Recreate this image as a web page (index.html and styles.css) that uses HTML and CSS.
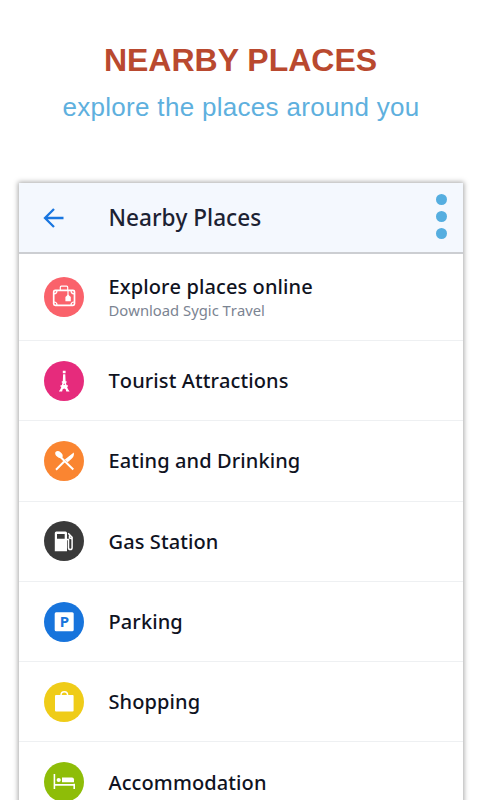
FILE: index.html
```html
<!DOCTYPE html>
<html lang="en">
<head>
<meta charset="utf-8">
<title>Nearby Places</title>
<link rel="stylesheet" href="styles.css">
</head>
<body>
<header class="promo">
  <h1 class="promo-title"><span>NEARBY PLACES</span></h1>
  <p class="promo-text"><span>explore the places around you</span></p>
</header>
<main class="card">
  <div class="bar">
    <svg class="back" viewBox="0 0 22 22"><path d="M20.5 11H2M11 2L2 11l9 9"/></svg>
    <h2 class="bar-title"><span>Nearby Places</span></h2>
    <div class="dots"><i></i><i></i><i></i></div>
  </div>
  <ul class="list">
    <li class="row row-tall">
      <svg class="icon coral" viewBox="0 0 40 40"><g class="line"><rect x="9.7" y="13.3" width="20.8" height="15" rx="1.5"/><path d="M16.3 13V10.2q0-1 1-1h5.4q1 0 1 1V13M10 16.8q3 0 3-3M30 16.8q-3 0-3-3M10 25q3 0 3 3M30 25q-3 0-3 3M24 14v5" stroke-width="1.2"/></g><path class="fill" d="M24 17.5l2.8 2.5v4.3h-5.4V20z"/></svg>
      <div class="labels"><span class="name">Explore places online</span><span class="sub">Download Sygic Travel</span></div>
    </li>
    <li class="row">
      <svg class="icon pink" viewBox="0 0 40 40"><path class="fill" d="M18.8 9.8h2.8v2.4h-2.8zM19.1 13.3h2.2l.3 7h1v1.4h-.7l.7 2.6h1.3v1.5h-.9q.6 2.6 2.6 4.6h-3.3q-.2-2.8-2.1-2.8t-2.1 2.8h-3.3q2-2 2.6-4.6h-.9v-1.5h1.3l.7-2.6h-.7v-1.4h1z"/><path class="pinkline" d="M19.5 24l.7-1.8.7 1.8z"/></svg>
      <div class="labels"><span class="name">Tourist Attractions</span></div>
    </li>
    <li class="row">
      <svg class="icon orange" viewBox="0 0 40 40"><path class="line utensil" d="M17 16.5L29.3 28.5M12 28.7L20.7 20"/><path class="fill" d="M11.5 11q2.3-2 5.3.5t1.4 5.3q-2.6 1.2-5.2-1.2t-1.5-4.6zM29.8 11.5q.8 4-2.7 6.8l-3.5 2.9-2.8-2.7z"/></svg>
      <div class="labels"><span class="name">Eating and Drinking</span></div>
    </li>
    <li class="row">
      <svg class="icon dark" viewBox="0 0 40 40"><path class="fill" d="M12.3 10.5h9.2q1.5 0 1.5 1.5v18.2H10.8V12q0-1.5 1.5-1.5z"/><path class="hole" d="M13 13.1h7.7v4.7H13z"/><path class="line hose" d="M22.5 18.5h2v8.2q0 1.8 1.8 1.8t1.8-1.8V16.3l-3.9-4.1M25.5 14.5v2.5l2.3.7"/></svg>
      <div class="labels"><span class="name">Gas Station</span></div>
    </li>
    <li class="row">
      <svg class="icon blue" viewBox="0 0 40 40"><rect class="fill" x="10.7" y="10.2" width="19" height="19" rx="1.5"/><text x="20.4" y="25.2" text-anchor="middle">P</text></svg>
      <div class="labels"><span class="name">Parking</span></div>
    </li>
    <li class="row">
      <svg class="icon yellow" viewBox="0 0 40 40"><rect class="fill" x="11" y="13" width="18.6" height="16.5" rx="1"/><path class="line handle" d="M17 13.3q0-3.6 3.3-3.6t3.3 3.6"/></svg>
      <div class="labels"><span class="name">Shopping</span></div>
    </li>
    <li class="row">
      <svg class="icon green" viewBox="0 0 40 40"><path class="line bed" d="M10.4 12v15M10.4 22.9h19.8M30.2 21.7v5.3"/><circle class="fill" cx="14.7" cy="18" r="2.1"/><path class="fill" d="M18 15.6h10q2 0 2 2v2.7H18z"/></svg>
      <div class="labels"><span class="name">Accommodation</span></div>
    </li>
  </ul>
</main>
</body>
</html>
```
FILE: styles.css
```css
* { box-sizing: border-box; margin: 0; padding: 0; }
body { width: 481px; height: 800px; overflow: hidden; background: #fff; }
.promo { height: 183px; padding-top: 42px; text-align: center; font-family: "Liberation Sans", Arial, sans-serif; }
.promo-title { font-size: 32px; line-height: 37px; font-weight: 700; color: #b9492f; }
.promo-text { margin: 13px 0 0 1px; font-size: 26px; line-height: 30px; letter-spacing: .3px; color: #5eb0de; }
.card { width: 444px; height: 640px; margin-left: 19px; background: #fff; box-shadow: 0 0 5px 1px rgba(0,0,0,.34); font-family: "Noto Sans", "Open Sans", sans-serif; font-kerning: none; }
.bar { display: flex; align-items: center; height: 71px; padding: 0 16px 0 24px; background: #f4f8fe; border-bottom: 2px solid #ccced2; }
.back { width: 22px; height: 22px; fill: none; stroke: #1976e0; stroke-width: 2.3; }
.bar-title { margin: 1px 0 0 43.5px; flex: 1; font-size: 22.6px; font-weight: 500; line-height: 30px; color: #1c2233; }
.dots { display: flex; flex-direction: column; gap: 6px; margin-top: -3px; }
.dots i { width: 11px; height: 11px; border-radius: 50%; background: #55aee0; }
.list { list-style: none; }
.row { display: flex; align-items: center; height: 80.3px; padding-left: 24.5px; border-bottom: 1px solid #eef0f2; }
.row-tall { height: 87px; }
.icon { width: 40px; height: 40px; flex: none; border-radius: 50%; }
.labels { display: flex; flex-direction: column; margin-left: 25px; padding-top: 1px; }
.row-tall .labels { padding-top: 0; }
.name { font-size: 20px; font-weight: 500; line-height: 26px; letter-spacing: .1px; color: #10131f; white-space: nowrap; }
.sub { font-size: 14.8px; line-height: 20px; color: #7b8492; white-space: nowrap; }
.coral { background: #fa626b; }
.pink { background: #e62b7c; }
.orange { background: #fa8531; }
.dark { background: #3a3a3a; }
.blue { background: #1774dc; }
.yellow { background: #efcc18; }
.green { background: #8ebd08; }
.fill { fill: #fff; }
.line { fill: none; stroke: #fff; stroke-width: 1.7; }
.pinkline { fill: #e62b7c; }
.utensil { stroke-width: 2; }
.hole { fill: #3a3a3a; }
.hose { stroke-width: 1.5; }
.handle { stroke-width: 1.5; }
.bed { stroke-width: 1.6; }
.blue text { font: 700 15px "Noto Sans", sans-serif; fill: #1774dc; }
```
